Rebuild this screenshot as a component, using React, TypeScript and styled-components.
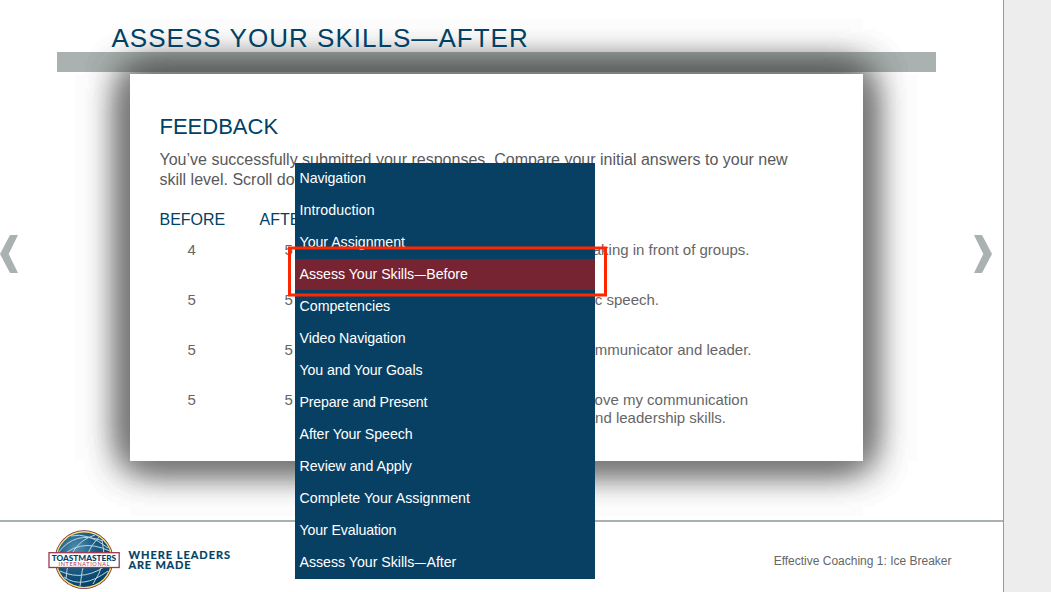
import React from 'react';
import styled, { createGlobalStyle } from 'styled-components';

const GlobalStyle = createGlobalStyle`
  * { box-sizing: border-box; }
  body { margin: 0; background: #ededed; overflow: hidden; font-family: "Liberation Sans", Arial, sans-serif; }
`;

const Player = styled.div`
  position: relative;
  display: flex;
  width: 1051px;
  height: 592px;
  background: #ededed;
`;

const Slide = styled.main`
  display: flex;
  flex-direction: column;
  width: 1004px;
  height: 592px;
  background: #fff;
  border-right: 1px solid #999;
`;

const Header = styled.header`
  width: 879px;
  height: 72px;
  margin-left: 57px;
  padding: 23px 0 0 54.5px;
  border-bottom: 20px solid #a9b2b0;
`;

const Title = styled.h1`
  position: relative;
  z-index: 1;
  margin: 0;
  font-size: 26px;
  line-height: 31px;
  font-weight: 400;
  letter-spacing: 1.03px;
  color: #004165;
  white-space: nowrap;
`;

const Stage = styled.div`
  display: flex;
  height: 448px;
  padding-top: 2px;
`;

const ArrowButton = styled.button`
  width: 19px;
  height: 38px;
  margin-top: 161px;
  padding: 0;
  border: 0;
  background: none;
  svg { display: block; }
`;

const Card = styled.section`
  position: relative;
  width: 733px;
  height: 387px;
  margin: 0 111px;
  &::before {
    content: "";
    position: absolute;
    inset: 0;
    opacity: 0.7;
    box-shadow: 0 0 37px #3d3d3d, 0 0 37px #3d3d3d, 0 0 37px #3d3d3d, 0 0 37px #3d3d3d;
  }
`;

const CardBody = styled.div`
  position: relative;
  height: 100%;
  padding: 40px 0 0 29.5px;
  background: #fff;
`;

const Heading = styled.h2`
  margin: 0;
  font-size: 22px;
  line-height: 26px;
  font-weight: 400;
  color: #004165;
`;

const Intro = styled.p`
  margin: 0;
  padding-top: 10px;
  font-size: 16px;
  line-height: 20px;
  color: #58595b;
  white-space: nowrap;
`;

const ColumnHeads = styled.div`
  display: grid;
  grid-template-columns: 100px 300px;
  margin-top: 20px;
  font-size: 16px;
  line-height: 20px;
  color: #004165;
`;

const Rows = styled.div`
  padding-top: 11px;
`;

const Row = styled.div`
  display: grid;
  grid-template-columns: 64px 97px 1fr;
  height: 50px;
  font-size: 15px;
  line-height: 18px;
  color: #666;
`;

const Score = styled.span<{ $indent: number }>`
  padding-left: ${p => p.$indent}px;
`;

const StatementLine = styled.div<{ $width: number }>`
  width: ${p => p.$width}px;
  text-align: right;
  white-space: nowrap;
`;

const Footer = styled.footer`
  display: flex;
  justify-content: space-between;
  height: 72px;
  padding: 0 51.5px 0 48px;
  border-top: 2px solid #a9b2b0;
`;

const Course = styled.span`
  margin-top: 31px;
  font-size: 12px;
  line-height: 16px;
  color: #666;
`;

const Menu = styled.nav`
  position: absolute;
  z-index: 2;
  left: 295px;
  top: 163px;
  width: 300px;
  height: 416px;
  background: #084064;
`;

const MenuItem = styled.a<{ $active: boolean; $tracking: number }>`
  display: block;
  height: 31px;
  margin-bottom: 1px;
  padding-left: 4.5px;
  font-size: 14.2px;
  line-height: 30px;
  letter-spacing: ${p => p.$tracking}px;
  color: #fff;
  white-space: nowrap;
  background: ${p => (p.$active ? '#772432' : 'transparent')};
`;

const Dash = styled.span`
  display: inline-block;
  transform: scaleX(0.8);
  margin: 0 -1px;
`;

const Highlight = styled.div`
  position: absolute;
  z-index: 3;
  left: 288px;
  top: 247px;
  width: 318.5px;
  height: 49px;
  border: solid #ff2600;
  border-width: 2px 3px;
  box-shadow:
    0 -1px rgba(255, 38, 0, 0.5), 0 1px rgba(255, 38, 0, 0.5),
    inset 0 1px rgba(255, 38, 0, 0.5), inset 0 -1px rgba(255, 38, 0, 0.5);
`;

const items = [
  { label: 'Navigation', tracking: -0.08 },
  { label: 'Introduction', tracking: 0.08 },
  { label: 'Your Assignment', tracking: -0.03 },
  { label: 'Assess Your Skills—Before', tracking: -0.03 },
  { label: 'Competencies', tracking: 0 },
  { label: 'Video Navigation', tracking: -0.06 },
  { label: 'You and Your Goals', tracking: -0.11 },
  { label: 'Prepare and Present', tracking: -0.16 },
  { label: 'After Your Speech', tracking: -0.08 },
  { label: 'Review and Apply', tracking: -0.03 },
  { label: 'Complete Your Assignment', tracking: 0 },
  { label: 'Your Evaluation', tracking: -0.14 },
  { label: 'Assess Your Skills—After', tracking: -0.02 },
];

const rows = [
  { before: 4, after: 5, lines: [{ text: 'I am comfortable speaking in front of groups.', width: 429 }] },
  { before: 5, after: 5, lines: [{ text: 'I can develop a basic speech.', width: 338.5 }] },
  { before: 5, after: 5, lines: [{ text: 'I am a confident communicator and leader.', width: 431 }] },
  {
    before: 5, after: 5, lines: [
      { text: 'I want to improve my communication', width: 427.5 },
      { text: 'and leadership skills.', width: 405.5 },
    ],
  },
];

const MenuLabel = ({ label }: { label: string }) => {
  const [head, tail] = label.split('—');
  return tail ? <>{head}<Dash>—</Dash>{tail}</> : <>{head}</>;
};

const Logo = () => (
  <svg width="190" height="70" viewBox="48 522 190 70">
    <defs>
      <radialGradient id="ocean" cx="0.35" cy="0.3" r="0.8">
        <stop offset="0" stopColor="#4f8fae" />
        <stop offset="0.45" stopColor="#1b5c86" />
        <stop offset="1" stopColor="#003a60" />
      </radialGradient>
    </defs>
    <circle cx="84" cy="559.7" r="29.4" fill="#772432" />
    <circle cx="84" cy="559.7" r="28.6" fill="#f2df74" />
    <circle cx="84" cy="559.7" r="27.2" fill="url(#ocean)" />
    <g fill="none" stroke="#bcd5e1" strokeWidth="1">
      <path d="M58 553Q75 530 103 541M57 562Q77 536 110 551M64 577Q82 590 108 571M60 571Q85 583 111 562" />
      <path d="M95 535Q68 543 66 579M99 537Q83 552 80 586M102 540Q108 562 93 584M71 536Q88 532 108 548" />
    </g>
    <rect x="49" y="552.7" width="70.2" height="14.8" fill="#fff" stroke="#9a3a50" strokeWidth="1.3" />
    <text x="51.7" y="561" fontFamily="Lato, sans-serif" fontWeight="900" fontSize="8" fill="#004165" textLength="64.5" lengthAdjust="spacingAndGlyphs">TOASTMASTERS</text>
    <text x="58.5" y="566.1" fontFamily="Lato, sans-serif" fontSize="5.5" fill="#b0304f" textLength="51">INTERNATIONAL</text>
    <g fontFamily="Lato, sans-serif" fontWeight="700" fontSize="11" fill="#004165" stroke="#004165" strokeWidth="0.2">
      <text x="128.5" y="558.5" textLength="101.5">WHERE LEADERS</text>
      <text x="128.5" y="569.4" textLength="62">ARE MADE</text>
    </g>
  </svg>
);

export default function App() {
  return (
    <>
      <GlobalStyle />
      <Player>
        <Slide>
          <Header><Title>ASSESS YOUR SKILLS—AFTER</Title></Header>
          <Stage>
            <ArrowButton aria-label="Previous">
              <svg width="19" height="38" viewBox="0 0 19 38"><path d="M10 0H18L8.7 19L18 38H10L0 19Z" fill="#a9b2b0" /></svg>
            </ArrowButton>
            <Card>
              <CardBody>
                <Heading>FEEDBACK</Heading>
                <Intro>
                  You’ve successfully submitted your responses. Compare your initial answers to your new<br />
                  skill level. Scroll down to review.
                </Intro>
                <ColumnHeads><span>BEFORE</span><span>AFTER</span></ColumnHeads>
                <Rows>
                  {rows.map((row, i) => (
                    <Row key={i}>
                      <Score $indent={28}>{row.before}</Score>
                      <Score $indent={61}>{row.after}</Score>
                      <div>
                        {row.lines.map(l => <StatementLine key={l.text} $width={l.width}>{l.text}</StatementLine>)}
                      </div>
                    </Row>
                  ))}
                </Rows>
              </CardBody>
            </Card>
            <ArrowButton aria-label="Next">
              <svg width="19" height="38" viewBox="0 0 19 38"><path d="M0 0H8L18 19L8 38H0L9.3 19Z" fill="#a9b2b0" /></svg>
            </ArrowButton>
          </Stage>
          <Footer>
            <Logo />
            <Course>Effective Coaching 1: Ice Breaker</Course>
          </Footer>
        </Slide>
        <Menu>
          {items.map(({ label, tracking }, i) => (
            <MenuItem key={label} $active={i === 3} $tracking={tracking}><MenuLabel label={label} /></MenuItem>
          ))}
        </Menu>
        <Highlight />
      </Player>
    </>
  );
}
